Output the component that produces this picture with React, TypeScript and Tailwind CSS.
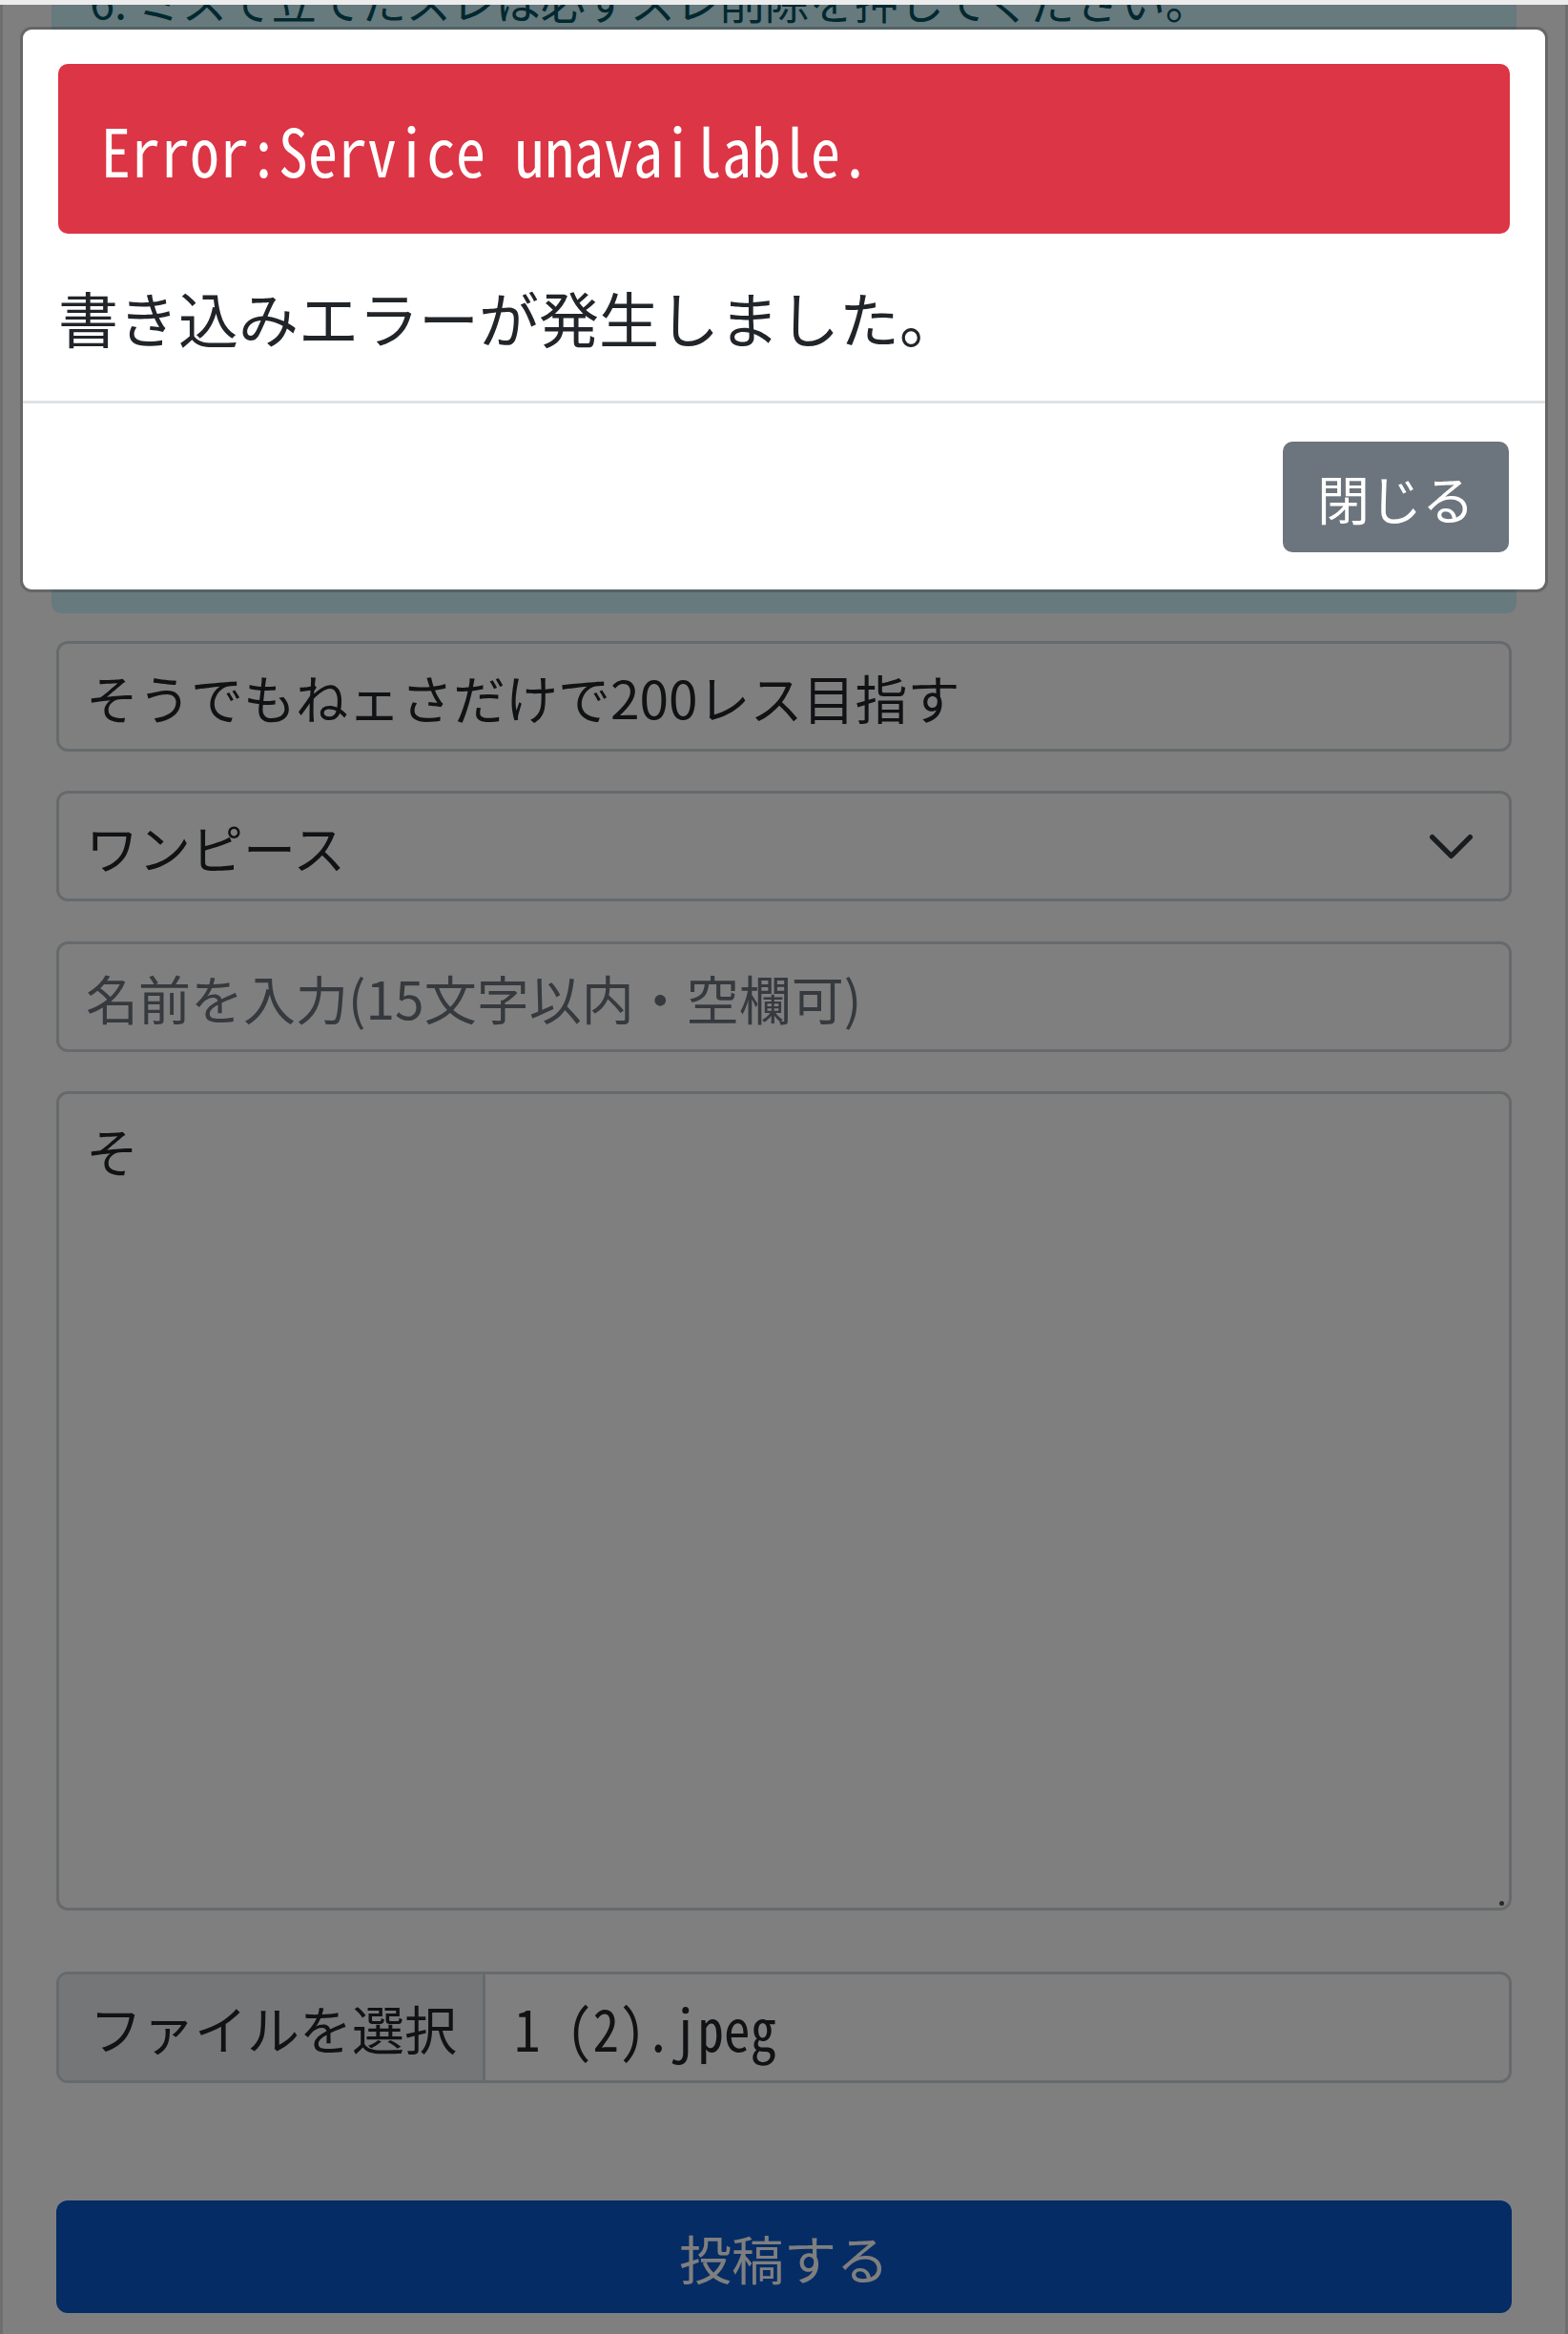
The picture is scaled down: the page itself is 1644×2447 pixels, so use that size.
import React from "react";

const jp = "font-['Noto_Sans_CJK_JP','Noto_Sans',sans-serif]";
const mono = "font-['Noto_Sans_Mono_CJK_JP','Noto_Sans_CJK_JP','Liberation_Mono',monospace]";

function ErrorModal() {
  return (
    <div className="fixed inset-0 z-10 bg-black/50 px-[21px] pt-[28px]">
      <div className="w-full rounded-[12px] border-[3px] border-black/20 bg-white bg-clip-padding">
        {/* Body */}
        <div className="px-[37px] pt-[36px] pb-[43px]">
          <div className={`flex h-[178px] items-center rounded-[10px] bg-[#dc3545] pl-[45px] text-[62px] text-white ${mono}`}>
            <span className="inline-block origin-left scale-y-[1.12]">Error:Service unavailable.</span>
          </div>
          <p className="mt-[42px] text-[63px] leading-[90px] text-[#212529]">書き込みエラーが発生しました。</p>
        </div>

        {/* Footer */}
        <div className="flex justify-end border-t-[3px] border-[#dee2e6] pt-[40px] pr-[38px] pb-[39px]">
          <button className="h-[116px] rounded-[10px] bg-[#6c757d] px-[36px] text-[55px] text-white">
            閉じる
          </button>
        </div>
      </div>
    </div>
  );
}

export default function App() {
  return (
    <div className={`relative h-[2447px] w-full overflow-hidden bg-white text-[#212529] ${jp}`}>
      <div className="relative z-20 h-[5px] bg-[#ececec]" />

      <div className="h-[2442px] overflow-hidden border-x-[3px] border-[#dcdcdc] px-[56px]">
        {/* Notice */}
        <div className="-mx-[5px] flow-root h-[638px] rounded-b-[10px] bg-[#cff4fc] pl-[40px] text-[#055160]">
          <p className="-mt-[33px] text-[47px] leading-[56px]">6. ミスで立てたスレは必ずスレ削除を押してください。</p>
        </div>

        {/* Title */}
        <div className="mt-[29px] flex h-[116px] items-center rounded-[12px] border-[3px] border-[#ced4da] pl-[28px] text-[55px]">
          そうでもねェさだけで200レス目指す
        </div>

        {/* Category */}
        <div className="mt-[41px] flex h-[116px] items-center justify-between rounded-[12px] border-[3px] border-[#ced4da] pr-[34px] pl-[28px] text-[55px]">
          <span>ワンピース</span>
          <svg width="53" height="53" viewBox="0 0 16 16" fill="none">
            <path d="M2 5l6 6 6-6" stroke="#343a40" strokeWidth="1.6" strokeLinecap="round" strokeLinejoin="round" />
          </svg>
        </div>

        {/* Name */}
        <div className="mt-[42px] flex h-[116px] items-center rounded-[12px] border-[3px] border-[#ced4da] pl-[28px] text-[55px] text-[#6c757d]">
          名前を入力(15文字以内・空欄可)
        </div>

        {/* Body */}
        <div className="relative mt-[41px] h-[859px] rounded-[12px] border-[3px] border-[#ced4da] pt-[18px] pl-[28px] text-[55px] leading-[81px]">
          そ
          <span className="absolute right-[5px] bottom-[2px] h-[5px] w-[5px] rounded-full bg-[#555]" />
        </div>

        {/* File */}
        <div className="mt-[64px] flex h-[117px] overflow-hidden rounded-[12px] border-[3px] border-[#ced4da] text-[55px]">
          <div className="flex items-center border-r-[3px] border-[#ced4da] bg-[#e9ecef] pr-[27px] pl-[32px]">
            ファイルを選択
          </div>
          <div className={`flex items-center pl-[30px] ${mono}`}>
            <span className="inline-block scale-y-[1.1]">1 (2).jpeg</span>
          </div>
        </div>

        {/* Submit */}
        <button className="mt-[123px] flex h-[118px] w-full items-center justify-center rounded-[12px] bg-[#0a58ca] text-[55px] text-white">
          投稿する
        </button>
      </div>

      <ErrorModal />
    </div>
  );
}
